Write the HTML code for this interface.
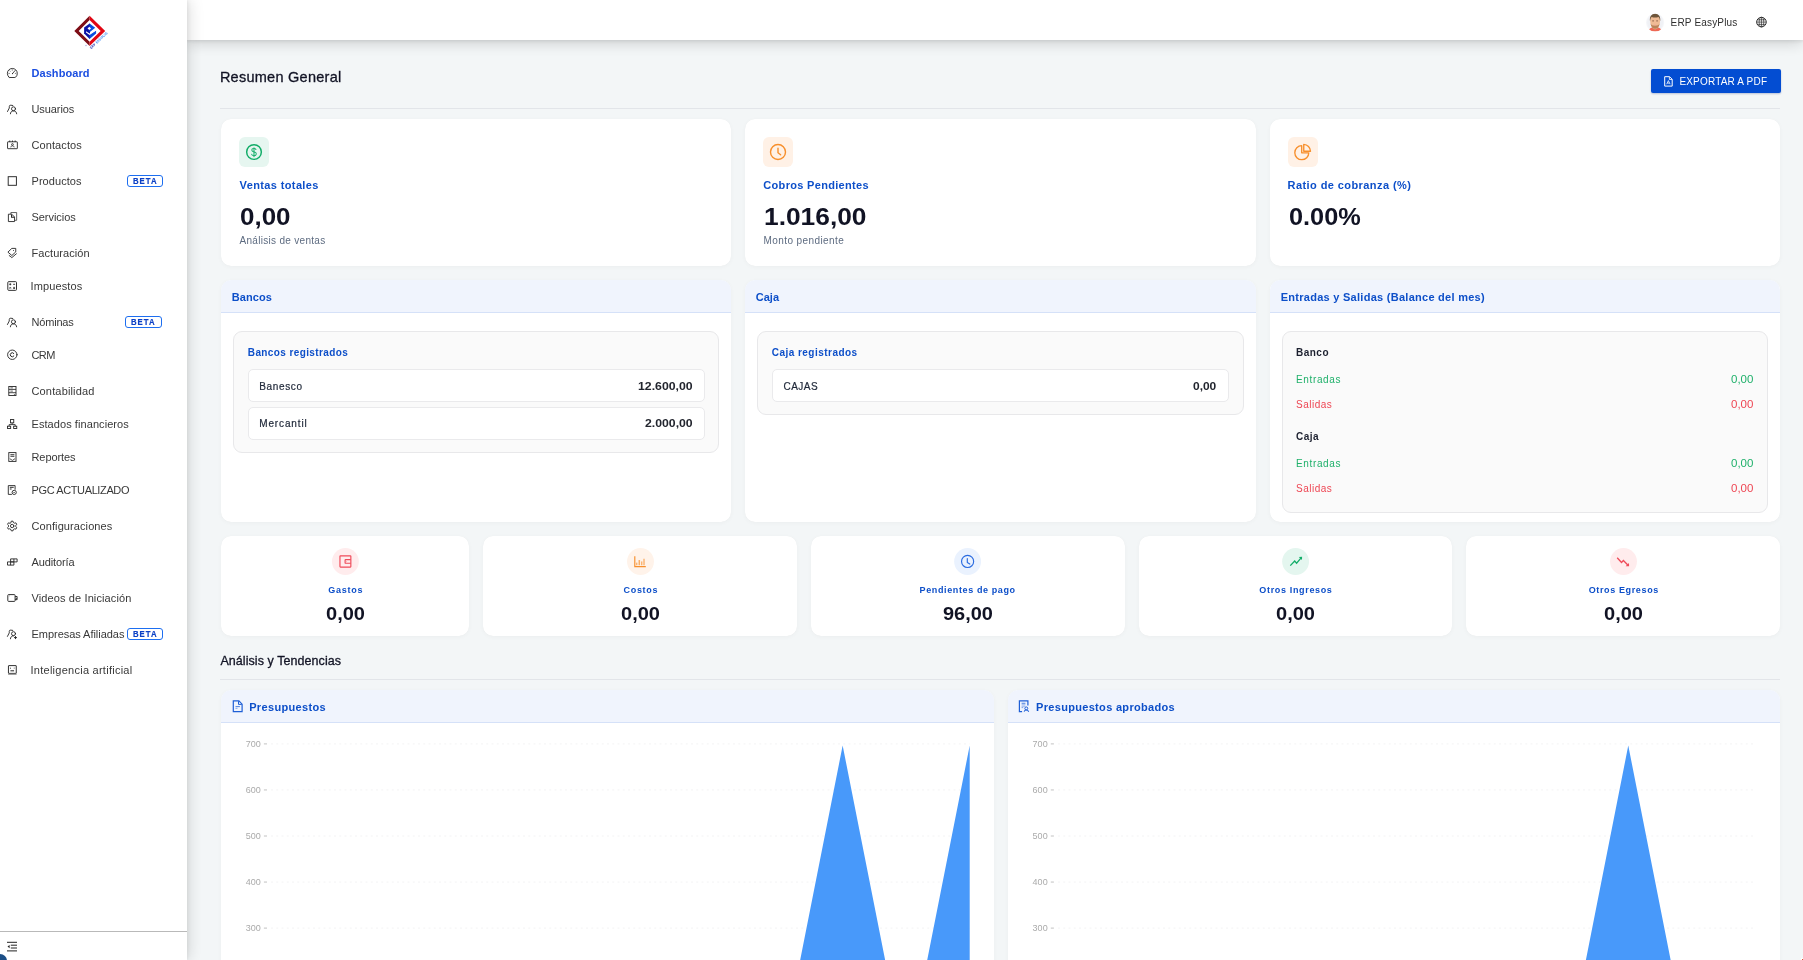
<!DOCTYPE html>
<html lang="es"><head><meta charset="utf-8"><title>ERP EasyPlus - Dashboard</title>
<style>
html,body{margin:0;padding:0}
body{width:1803px;height:960px;overflow:hidden;background:#f3f6f7;font-family:"Liberation Sans",sans-serif;position:relative}
div,span,svg{position:absolute;box-sizing:border-box}
.t{white-space:pre;display:block}
.card{background:#fff;border-radius:10px;box-shadow:0 1px 6px rgba(0,0,0,.045),0 0 1px rgba(0,0,0,.06)}
.hd{background:#f0f4fd;border-bottom:1px solid #d5e1f8;border-radius:10px 10px 0 0}
.inner{background:#fafafa;border:1px solid #e8e8ea;border-radius:9px}
.row{background:#fff;border:1px solid #eaeaec;border-radius:5px}
.hr{height:1px;background:#e2e5e9}
.beta{border:1px solid #1d6ef0;border-radius:3px;background:#fff}
</style></head><body><div id="wrap" style="left:0;top:0;width:1803px;height:960px;overflow:hidden;will-change:transform;opacity:.999">
<div id="header" style="left:187px;top:0;width:1616px;height:40px;background:#fff;box-shadow:0 3px 16px rgba(0,0,0,.17),0 1px 4px rgba(0,0,0,.10)"></div>
<svg style="left:1645px;top:13px" width="20" height="20" viewBox="-0.9 -0.2 20 20"><defs><clipPath id="av"><circle cx="9.200" cy="9.200" r="9.200"/></clipPath><radialGradient id="avg" cx=".5" cy=".5" r=".5"><stop offset=".8" stop-color="#f0f1f5"/><stop offset="1" stop-color="#f8f9fb"/></radialGradient></defs>
<g clip-path="url(#av)"><rect width="18.400" height="18.400" fill="url(#avg)"/>
<path d="M2.600 18.400C3 15.800 4.800 14.500 6.800 14.100H11.600C13.600 14.500 15.400 15.800 15.800 18.400Z" fill="#ee6955"/>
<path d="M6.700 13.300h5v1.600c-.8 1-1.700 1.300-2.500 1.300s-1.700-.3-2.500-1.300z" fill="#e9ab85"/>
<path d="M4.300 7.500C4.300 3.500 6.200 1.500 9.200 1.500S14.100 3.500 14.100 7.500C14.100 11.800 12.300 15.300 9.200 15.300S4.300 11.800 4.300 7.500Z" fill="#f0bb95"/>
<path d="M4.600 10.200C5.200 13.600 6.900 15.500 9.200 15.500S13.200 13.600 13.800 10.200C13 12 11.500 12.300 9.200 12.300S5.400 12 4.600 10.200Z" fill="#b98458"/>
<path d="M4.100 8C3.500 3.400 5.600.6 9.200.6S14.900 3.400 14.300 8C13.900 5.600 13.300 4.300 12.600 3.700C11.500 4.300 10.400 4.400 9.200 4.400S6.900 4.300 5.800 3.700C5.100 4.300 4.500 5.600 4.100 8Z" fill="#6e553a"/>
<path d="M6.300 7.700h1.800M10.300 7.700h1.800" stroke="#8a5f48" stroke-width=".9"/>
<path d="M8.200 12.100h2" stroke="#e79a8e" stroke-width=".9"/>
</g></svg>
<span class="t" style="top:18px;font-size:10px;line-height:10px;color:#2f2f2f;left:1670.60px;letter-spacing:0.171px;">ERP EasyPlus</span>
<svg style="left:1755px;top:16px" width="13" height="13" viewBox="-0.45 -0.1 13 13" fill="none" stroke="#2e2e2e" stroke-width=".7"><circle cx="6" cy="6" r="4.800" stroke-width="1"/><ellipse cx="6" cy="6" rx="2.300" ry="4.800"/><path d="M1.200 6h9.600M1.900 3.700h8.200M1.900 8.300h8.200M6 1.200v9.600"/></svg>
<div id="sidebar" style="left:0;top:0;width:187px;height:960px;background:#fff;box-shadow:2px 0 15px rgba(0,0,0,.14),1px 0 4px rgba(0,0,0,.07)"></div>
<svg style="left:70px;top:12px" width="42" height="40" viewBox="70 12 42 40">
<polygon points="89.600,15.800 74.300,30.900 89.600,46 89.600,41.700 78.700,30.900 89.600,20.100" fill="#7d0d16"/>
<polygon points="89.600,15.800 105.200,30.900 89.600,46 89.600,41.700 100.700,30.900 89.600,20.100" fill="#e20613"/>
<polygon points="90,23.400 89.600,23.400 84.100,27.600 84.100,33.600 89.600,38.900 90,38.500" fill="#0a12a6"/>
<polygon points="89.600,23.400 95.200,27.800 89.600,32.300 89.600,34.300 96.100,30.400 96.100,33.600 89.600,38.900" fill="#0a4fe0"/>
<polygon points="89.300,26.700 91.100,28.400 89.300,30.100 87.500,28.400" fill="#fff"/>
<polygon points="86,31.200 89.600,33.500 96.200,29.300 96.200,30.600 89.600,34.900 86,32.600" fill="#fff"/>
<text transform="translate(91.300,49.300) rotate(-43.500)" font-family="Liberation Sans, sans-serif" font-weight="700" font-size="3.600" fill="#2230b0" textLength="6.500" lengthAdjust="spacingAndGlyphs">ERP</text>
<text transform="translate(97,43.700) rotate(-43.500)" font-family="Liberation Sans, sans-serif" font-weight="700" font-size="3.600" fill="#3f8cf0" textLength="15" lengthAdjust="spacingAndGlyphs">EASYPLUS</text>
<circle cx="86" cy="45.500" r=".7" fill="#9aa2e0"/>
</svg>
<span class="t" style="top:68px;font-size:11px;line-height:11px;color:#1b4ee0;font-weight:700;left:31.50px;letter-spacing:0.064px;">Dashboard</span>
<svg style="left:5px;top:66px" width="14" height="14" viewBox="-7.30 -7.00 14 14" fill="none" stroke="#262626" stroke-width="0.9" stroke-linecap="round" stroke-linejoin="round"><path d="M-3.300 4.200A5 5 0 1 1 3.300 4.200Q3 4.500 2.600 4.500H-2.600Q-3 4.500-3.300 4.200Z"/><path d="M.2.6L2.700-2.400" stroke-width=".85"/><circle cx=".2" cy=".6" r=".55" fill="#262626" stroke="none"/><path d="M-3.600.4h.8M0-3.400v.7M-2.600-2.200l.5.5M3.600.4h-.6" stroke-width=".55"/></svg>
<span class="t" style="top:104px;font-size:11px;line-height:11px;color:#383838;left:31.50px;letter-spacing:-0.093px;">Usuarios</span>
<svg style="left:5px;top:102px" width="14" height="14" viewBox="-7.10 -7.00 14 14" fill="none" stroke="#262626" stroke-width="0.9" stroke-linecap="round" stroke-linejoin="round"><circle cx="1.400" cy="-.2" r="2"/><path d="M-1.700 4.800C-1.700 3.200-.5 1.900 1.400 1.900S4.600 3.200 4.600 4.800"/><path d="M.7-3.500L-1.300-3.800Q-2.800-3.900-2.800-2.500L-2.800-1L-4.600 2.500"/></svg>
<span class="t" style="top:140px;font-size:11px;line-height:11px;color:#383838;left:31.50px;letter-spacing:0.090px;">Contactos</span>
<svg style="left:5px;top:138px" width="14" height="14" viewBox="-7.45 -7.00 14 14" fill="none" stroke="#262626" stroke-width="0.9" stroke-linejoin="miter"><rect x="-4.900" y="-3.200" width="9.800" height="6.900" rx=".4"/><path d="M-2.700-4.500v1.500M0-4.500v1.500M2.700-4.500v1.500"/><circle cx="0" cy="-.5" r=".9" stroke-width=".8"/><path d="M-1.700 2.300C-1.500 1.200-.8.800 0 .8S1.500 1.200 1.700 2.300" stroke-width=".8"/></svg>
<span class="t" style="top:176px;font-size:11px;line-height:11px;color:#383838;left:31.50px;letter-spacing:0.059px;">Productos</span>
<svg style="left:5px;top:174px" width="14" height="14" viewBox="-7.30 -7.00 14 14" fill="none" stroke="#262626" stroke-width="0.95" stroke-linejoin="miter"><rect x="-4.100" y="-4.300" width="8.200" height="8.600"/></svg>
<span class="t" style="top:212px;font-size:11px;line-height:11px;color:#383838;left:31.50px;letter-spacing:-0.047px;">Servicios</span>
<svg style="left:5px;top:210px" width="14" height="14" viewBox="-7.35 -7.00 14 14" fill="none" stroke="#262626" stroke-width="0.9" stroke-linejoin="miter"><path d="M-3.950-2.800H-.6L2.200 0V4.550H-3.950Z"/><path d="M-.8-2.600V.2H2" stroke-width="1.100"/><path d="M-1.500-3V-4.450H4.300V3.300H2.500" stroke-opacity=".8"/></svg>
<span class="t" style="top:248px;font-size:11px;line-height:11px;color:#383838;left:31.50px;letter-spacing:0.065px;">Facturación</span>
<svg style="left:5px;top:246px" width="14" height="14" viewBox="-7.40 -7.00 14 14" fill="none" stroke="#262626" stroke-width="0.9" stroke-linecap="round" stroke-linejoin="round"><path d="M-.2-4.600H3.350V-1.100L-.55 2.500L-4.200-.6Z" stroke-linejoin="miter"/><circle cx="1.100" cy="-2.400" r=".5" fill="#262626" stroke="none"/><path d="M-3.500 2.300L-.55 4.600L4.300.5" stroke-linejoin="miter" stroke-linecap="butt"/></svg>
<span class="t" style="top:281px;font-size:11px;line-height:11px;color:#383838;left:30.50px;letter-spacing:0.125px;">Impuestos</span>
<svg style="left:5px;top:279px" width="14" height="14" viewBox="-7.15 -7.00 14 14" fill="none" stroke="#262626" stroke-width="0.95" stroke-linejoin="miter"><rect x="-4.350" y="-4.350" width="8.700" height="8.700" rx=".9"/><path d="M-2.900-1.700h2M-1.900-2.700v2M1-1.700h1.900" stroke-width=".9"/><path d="M-2.600 1.200l1.400 1.400M-1.200 1.200l-1.400 1.400M1 1.400h1.900M1 2.500h1.900" stroke-width=".8"/></svg>
<span class="t" style="top:317px;font-size:11px;line-height:11px;color:#383838;left:31.50px;letter-spacing:-0.192px;">Nóminas</span>
<svg style="left:5px;top:315px" width="14" height="14" viewBox="-7.05 -7.00 14 14" fill="none" stroke="#262626" stroke-width="0.9" stroke-linecap="round" stroke-linejoin="round"><circle cx="1.400" cy="-.2" r="2"/><path d="M-1.700 4.800C-1.700 3.200-.5 1.900 1.400 1.900S4.600 3.200 4.600 4.800"/><path d="M.7-3.500L-1.300-3.800Q-2.800-3.900-2.800-2.500L-2.800-1L-4.600 2.500"/></svg>
<span class="t" style="top:350px;font-size:11px;line-height:11px;color:#383838;left:31.50px;letter-spacing:-0.600px;">CRM</span>
<svg style="left:5px;top:347px" width="14" height="14" viewBox="-7.30 -7.75 14 14" fill="none" stroke="#262626" stroke-width="0.9" stroke-linecap="round" stroke-linejoin="round"><circle cx="0" cy="0" r="4.700"/><path d="M1.500-1.300A2 2 0 1 0 1.500 1.300" stroke-width="1"/></svg>
<span class="t" style="top:386px;font-size:11px;line-height:11px;color:#383838;left:31.50px;letter-spacing:0.156px;">Contabilidad</span>
<svg style="left:5px;top:384px" width="14" height="14" viewBox="-7.40 -7.00 14 14" fill="none" stroke="#262626" stroke-width="0.9" stroke-linejoin="miter"><rect x="-3.600" y="-4.500" width="7.200" height="9"/><path d="M-3.600-1.600h7.200M-3.600 1.700h7.200" stroke-width=".85"/><path d="M-2-3.100h2.500M-2 .1h2.500M1.500 3.300l1.500 .9" stroke-width=".7"/></svg>
<span class="t" style="top:419px;font-size:11px;line-height:11px;color:#383838;left:31.50px;letter-spacing:0.070px;">Estados financieros</span>
<svg style="left:5px;top:417px" width="14" height="14" viewBox="-7.15 -7.00 14 14" fill="none" stroke="#262626" stroke-width="0.9" stroke-linejoin="miter"><rect x="-1.600" y="-4.450" width="3.200" height="3.300"/><rect x="-4.600" y="2.200" width="3.100" height="2.300"/><rect x="1.500" y="2.200" width="3.100" height="2.300"/><path d="M0-1.100V.6M-3.050 2.200V.6H3.050V2.200" stroke-width=".85"/></svg>
<span class="t" style="top:452px;font-size:11px;line-height:11px;color:#383838;left:31.50px;letter-spacing:-0.091px;">Reportes</span>
<svg style="left:5px;top:450px" width="14" height="14" viewBox="-7.40 -7.00 14 14" fill="none" stroke="#262626" stroke-width="0.9" stroke-linejoin="miter"><rect x="-3.600" y="-4.400" width="7.200" height="8.800"/><path d="M-2-2.300h4M-2-.7h4" stroke-width=".9"/><path d="M-2.600 1.700L0 3.400L2.600 1.700" stroke-width=".8"/></svg>
<span class="t" style="top:485px;font-size:11px;line-height:11px;color:#383838;left:31.50px;letter-spacing:-0.382px;">PGC ACTUALIZADO</span>
<svg style="left:5px;top:483px" width="14" height="14" viewBox="-7.00 -7.00 14 14" fill="none" stroke="#262626" stroke-width="0.9" stroke-linejoin="miter"><path d="M-.1 4.400H-3.700V-4.400H3.100V-.3"/><path d="M-2.200-2.700h3.900M-2.200-1h1.800" stroke-width="1"/><circle cx="2.200" cy="2.400" r="2.100"/><path d="M1.400 2.500h1.400" stroke-width=".8"/></svg>
<span class="t" style="top:521px;font-size:11px;line-height:11px;color:#383838;left:31.50px;letter-spacing:0.090px;">Configuraciones</span>
<svg style="left:5px;top:519px" width="14" height="14" viewBox="-7.15 -7.00 14 14" fill="none" stroke="#262626" stroke-width="0.9" stroke-linecap="round" stroke-linejoin="round"><path d="M-1.16 -3.57 L-0.87 -4.82 L0.87 -4.82 L1.16 -3.57 L2.51 -2.79 L3.74 -3.16 L4.61 -1.66 L3.67 -0.78 L3.67 0.78 L4.61 1.66 L3.74 3.16 L2.51 2.79 L1.16 3.57 L0.87 4.82 L-0.87 4.82 L-1.16 3.57 L-2.51 2.79 L-3.74 3.16 L-4.61 1.66 L-3.67 0.78 L-3.67 -0.78 L-4.61 -1.66 L-3.74 -3.16 L-2.51 -2.79Z"/><circle cx="0" cy="0" r="1.700"/></svg>
<span class="t" style="top:557px;font-size:11px;line-height:11px;color:#383838;left:31.50px;letter-spacing:-0.114px;">Auditoría</span>
<svg style="left:5px;top:555px" width="14" height="14" viewBox="-7.30 -7.00 14 14" fill="none" stroke="#262626" stroke-width="0.9" stroke-linejoin="miter"><path d="M-1.700-3.100H4.800V-.1H-1.700ZM1.600-3.100V-.1M-4.800-.1H1.600V3.100H-4.800ZM-1.700-.1V3.100"/></svg>
<span class="t" style="top:593px;font-size:11px;line-height:11px;color:#383838;left:31.50px;letter-spacing:0.117px;">Videos de Iniciación</span>
<svg style="left:5px;top:591px" width="14" height="14" viewBox="-7.40 -7.00 14 14" fill="none" stroke="#262626" stroke-width="0.95" stroke-linejoin="miter"><rect x="-4.600" y="-3.400" width="7.300" height="6.800" rx=".8"/><path d="M2.700-1.500H4.700V1.700H2.700M2.900 1.300l1.700-.8" /><path d="M-3.200-2.100h.4" stroke-width=".7"/></svg>
<span class="t" style="top:629px;font-size:11px;line-height:11px;color:#383838;left:31.50px;letter-spacing:-0.038px;">Empresas Afiliadas</span>
<svg style="left:5px;top:627px" width="14" height="14" viewBox="-7.05 -7.00 14 14" fill="none" stroke="#262626" stroke-width="0.9" stroke-linecap="round" stroke-linejoin="round"><circle cx="1.450" cy="-.3" r="2"/><path d="M-1.650 4.800C-1.650 3.200-.5 1.900 1.400 1.800"/><path d="M.7-3.600L-1.300-3.900Q-2.800-4-2.800-2.600L-2.800-1.100L-4.600 2.400"/><path d="M3.450 2.500v2.200M2.350 3.600h2.200" stroke-width=".95"/></svg>
<span class="t" style="top:665px;font-size:11px;line-height:11px;color:#383838;left:30.50px;letter-spacing:0.259px;">Inteligencia artificial</span>
<svg style="left:5px;top:663px" width="14" height="14" viewBox="-7.35 -7.00 14 14" fill="none" stroke="#262626" stroke-width="0.95" stroke-linejoin="miter"><rect x="-3.900" y="-4.400" width="7.800" height="7.800" rx=".3"/><path d="M-4.200 4.200h8.400" stroke="#8a8a8a" stroke-width="1.200"/><path d="M-1.900-2.300v1" stroke-width=".9"/><path d="M1.300-1.900h1.400" stroke="#999" stroke-width="1"/><path d="M-1.900.8h3.600" stroke-width="1"/></svg>
<div class="beta" style="left:127px;top:175px;width:36px;height:12px;"></div>
<span class="t" style="top:177px;font-size:9px;line-height:9px;color:#0b40c5;font-weight:700;left:132.90px;letter-spacing:1.192px;transform:scaleX(0.86);transform-origin:0 0;-webkit-text-stroke:.2px #0b40c5;">BETA</span>
<div class="beta" style="left:125px;top:316px;width:37px;height:12px;"></div>
<span class="t" style="top:318px;font-size:9px;line-height:9px;color:#0b40c5;font-weight:700;left:130.90px;letter-spacing:1.192px;transform:scaleX(0.86);transform-origin:0 0;-webkit-text-stroke:.2px #0b40c5;">BETA</span>
<div class="beta" style="left:127px;top:628px;width:36px;height:12px;"></div>
<span class="t" style="top:630px;font-size:9px;line-height:9px;color:#0b40c5;font-weight:700;left:132.90px;letter-spacing:1.192px;transform:scaleX(0.86);transform-origin:0 0;-webkit-text-stroke:.2px #0b40c5;">BETA</span>
<div style="left:0;top:931px;width:187px;height:1px;background:#b9b9b9"></div>
<svg style="left:7px;top:941px" width="11" height="11" viewBox="0 -0.6 11 11" fill="none" stroke="#222" stroke-width="1"><path d="M0 .7h10M3.800 3.600h6.200M3.800 6.400h6.200M0 9.300h10"/><path d="M2.600 3.300v3.400L.5 5z" fill="#222" stroke="none"/></svg>
<div style="left:-7px;top:954px;width:14px;height:14px;border-radius:50%;background:#1c4f86"></div>
<span class="t" style="top:70px;font-size:14.5px;line-height:14.5px;color:#111324;left:219.90px;letter-spacing:0.261px;-webkit-text-stroke:.3px #111324;">Resumen General</span>
<div style="left:1651px;top:69px;width:130px;height:24px;background:#034dd2;border-radius:2px;box-shadow:0 1px 2px rgba(0,40,120,.25)"></div>
<svg style="left:1661px;top:74px" width="14" height="14" viewBox="-7.30 -7.20 14 14" fill="none" stroke="#fff" stroke-width="1.0" stroke-linejoin="miter"><path d="M-3.600-4.500H1.300L3.900-1.900V4.900H-3.600Z"/><path d="M1.100-4.300V-1.700H3.700" stroke-width=".8"/><path d="M-1.600 3L.1-.6L1.800 3M-.8 1.900H1" stroke-width=".8"/></svg>
<span class="t" style="top:77px;font-size:10px;line-height:10px;color:#fff;left:1679.40px;letter-spacing:0.184px;">EXPORTAR A PDF</span>
<div class="hr" style="left:220px;top:108px;width:1560px;height:1px;"></div>
<div class="card" style="left:221px;top:119px;width:510px;height:147px;"></div>
<div style="left:239px;top:137px;width:30px;height:30px;background:#e6f6f0;border-radius:6px"></div>
<svg style="left:244px;top:142px" width="20" height="20" viewBox="-10.00 -10.00 20 20" fill="none" stroke="#12ad68" stroke-width="1.45" stroke-linecap="round" stroke-linejoin="round"><circle cx="0" cy="0" r="7.350"/><text x="0" y="3.800" text-anchor="middle" font-family="Liberation Sans, sans-serif" font-size="10.500" fill="#12ad68" stroke="none">$</text><path d="M0-4.600V4.800" stroke-width=".55"/></svg>
<span class="t" style="top:180px;font-size:11px;line-height:11px;color:#0d4fc9;font-weight:700;left:239.60px;letter-spacing:0.372px;">Ventas totales</span>
<span class="t" style="top:205px;font-size:24px;line-height:24px;color:#111324;font-weight:700;left:239.90px;transform:scaleX(1.0806);transform-origin:0 0;">0,00</span>
<span class="t" style="top:236px;font-size:10px;line-height:10px;color:#5d6b80;left:239.50px;letter-spacing:0.300px;">Análisis de ventas</span>
<div class="card" style="left:745px;top:119px;width:511px;height:147px;"></div>
<div style="left:763px;top:137px;width:30px;height:30px;background:#fff1e6;border-radius:6px"></div>
<svg style="left:768px;top:142px" width="20" height="20" viewBox="-10.00 -10.00 20 20" fill="none" stroke="#f78f2c" stroke-width="1.4" stroke-linecap="round" stroke-linejoin="round"><circle cx="0" cy="0" r="7.500"/><path d="M0-3.700V.8L2.600 2.800"/></svg>
<span class="t" style="top:180px;font-size:11px;line-height:11px;color:#0d4fc9;font-weight:700;left:763.30px;letter-spacing:0.317px;">Cobros Pendientes</span>
<span class="t" style="top:205px;font-size:24px;line-height:24px;color:#111324;font-weight:700;left:764.00px;transform:scaleX(1.0969);transform-origin:0 0;">1.016,00</span>
<span class="t" style="top:236px;font-size:10px;line-height:10px;color:#5d6b80;left:763.50px;letter-spacing:0.411px;">Monto pendiente</span>
<div class="card" style="left:1270px;top:119px;width:510px;height:147px;"></div>
<div style="left:1288px;top:137px;width:30px;height:30px;background:#fff1e6;border-radius:6px"></div>
<svg style="left:1292px;top:141px" width="22" height="22" viewBox="-11.00 -11.00 22 22" fill="none" stroke="#f78f2c" stroke-width="1.35" stroke-linecap="round" stroke-linejoin="round"><path d="M-1.300-6.300A7 7 0 1 0 5.800.8H-1.300Z"/><path d="M.75-7.600V-.75H7.500A7 7 0 0 0 .75-7.600Z"/></svg>
<span class="t" style="top:180px;font-size:11px;line-height:11px;color:#0d4fc9;font-weight:700;left:1287.60px;letter-spacing:0.418px;">Ratio de cobranza (%)</span>
<span class="t" style="top:205px;font-size:24px;line-height:24px;color:#111324;font-weight:700;left:1288.90px;transform:scaleX(1.0545);transform-origin:0 0;">0.00%</span>
<div class="card" style="left:221px;top:280px;width:510px;height:242px;"></div>
<div class="hd" style="left:221px;top:280px;width:510px;height:33px;"></div>
<span class="t" style="top:292px;font-size:11px;line-height:11px;color:#0d4fc9;font-weight:700;left:231.70px;letter-spacing:0.096px;">Bancos</span>
<div class="card" style="left:745px;top:280px;width:511px;height:242px;"></div>
<div class="hd" style="left:745px;top:280px;width:511px;height:33px;"></div>
<span class="t" style="top:292px;font-size:11px;line-height:11px;color:#0d4fc9;font-weight:700;left:755.70px;letter-spacing:0.061px;">Caja</span>
<div class="card" style="left:1270px;top:280px;width:510px;height:242px;"></div>
<div class="hd" style="left:1270px;top:280px;width:510px;height:33px;"></div>
<span class="t" style="top:292px;font-size:11px;line-height:11px;color:#0d4fc9;font-weight:700;left:1280.70px;letter-spacing:0.273px;">Entradas y Salidas (Balance del mes)</span>
<div class="inner" style="left:233px;top:331px;width:486px;height:122px;"></div>
<span class="t" style="top:348px;font-size:10px;line-height:10px;color:#0d4fc9;font-weight:700;left:247.80px;letter-spacing:0.394px;">Bancos registrados</span>
<div class="row" style="left:248px;top:369px;width:457px;height:33px;"></div>
<span class="t" style="top:382px;font-size:10px;line-height:10px;color:#1e2738;left:259.20px;letter-spacing:0.658px;-webkit-text-stroke:.2px #1e2738;">Banesco</span>
<span class="t" style="top:382px;font-size:10px;line-height:10px;color:#22252e;font-weight:700;left:637.60px;transform:scaleX(1.2287);transform-origin:0 0;">12.600,00</span>
<div class="row" style="left:248px;top:407px;width:457px;height:33px;"></div>
<span class="t" style="top:419px;font-size:10px;line-height:10px;color:#1e2738;left:259.20px;letter-spacing:0.869px;-webkit-text-stroke:.2px #1e2738;">Mercantil</span>
<span class="t" style="top:419px;font-size:10px;line-height:10px;color:#22252e;font-weight:700;left:644.60px;transform:scaleX(1.2245);transform-origin:0 0;">2.000,00</span>
<div class="inner" style="left:757px;top:331px;width:487px;height:84px;"></div>
<span class="t" style="top:348px;font-size:10px;line-height:10px;color:#0d4fc9;font-weight:700;left:771.70px;letter-spacing:0.473px;">Caja registrados</span>
<div class="row" style="left:772px;top:369px;width:457px;height:33px;"></div>
<span class="t" style="top:382px;font-size:10px;line-height:10px;color:#1e2738;left:783.50px;letter-spacing:0.460px;-webkit-text-stroke:.2px #1e2738;">CAJAS</span>
<span class="t" style="top:382px;font-size:10px;line-height:10px;color:#22252e;font-weight:700;left:1193.30px;transform:scaleX(1.1959);transform-origin:0 0;">0,00</span>
<div class="inner" style="left:1282px;top:331px;width:486px;height:182px;"></div>
<span class="t" style="top:348px;font-size:10px;line-height:10px;color:#1d2130;font-weight:700;left:1296.10px;letter-spacing:0.462px;">Banco</span>
<span class="t" style="top:375px;font-size:10px;line-height:10px;color:#1fb06a;left:1296.10px;letter-spacing:0.611px;">Entradas</span>
<span class="t" style="top:375px;font-size:10px;line-height:10px;color:#1fb06a;left:1730.50px;transform:scaleX(1.1507);transform-origin:0 0;">0,00</span>
<span class="t" style="top:400px;font-size:10px;line-height:10px;color:#ee4653;left:1296.10px;letter-spacing:0.467px;">Salidas</span>
<span class="t" style="top:400px;font-size:10px;line-height:10px;color:#ee4653;left:1730.50px;transform:scaleX(1.1507);transform-origin:0 0;">0,00</span>
<span class="t" style="top:432px;font-size:10px;line-height:10px;color:#1d2130;font-weight:700;left:1296.10px;letter-spacing:0.446px;">Caja</span>
<span class="t" style="top:459px;font-size:10px;line-height:10px;color:#1fb06a;left:1296.10px;letter-spacing:0.611px;">Entradas</span>
<span class="t" style="top:459px;font-size:10px;line-height:10px;color:#1fb06a;left:1730.50px;transform:scaleX(1.1507);transform-origin:0 0;">0,00</span>
<span class="t" style="top:484px;font-size:10px;line-height:10px;color:#ee4653;left:1296.10px;letter-spacing:0.467px;">Salidas</span>
<span class="t" style="top:484px;font-size:10px;line-height:10px;color:#ee4653;left:1730.50px;transform:scaleX(1.1507);transform-origin:0 0;">0,00</span>
<div class="card" style="left:221px;top:536px;width:248px;height:100px;"></div>
<svg style="left:329px;top:545px" width="32" height="32" viewBox="-16.40 -16.45 32 32" fill="none" stroke="#ef4b5a" stroke-width="1.15" stroke-linejoin="miter"><circle cx="0" cy="0" r="13.45" fill="#ffeced" stroke="none"/><rect x="-5.450" y="-5.600" width="10.900" height="11.200" rx=".5"/><path d="M5.400-1.900H.3Q-.3-1.900-.3-1.300V1.200Q-.3 1.800.3 1.800H5.400"/><path d="M1.200 0h.3" stroke-width="1.100"/></svg>
<span class="t" style="top:586px;font-size:9px;line-height:9px;color:#0d4fc9;font-weight:700;left:328.35px;letter-spacing:0.719px;">Gastos</span>
<span class="t" style="top:605px;font-size:18px;line-height:18px;color:#111324;font-weight:700;left:325.90px;transform:scaleX(1.1136);transform-origin:0 0;">0,00</span>
<div class="card" style="left:483px;top:536px;width:314px;height:100px;"></div>
<svg style="left:624px;top:545px" width="32" height="32" viewBox="-16.50 -16.45 32 32" fill="none" stroke="#f78f2c" stroke-width="1.1" stroke-linejoin="miter"><circle cx="0" cy="0" r="13.45" fill="#fff3ea" stroke="none"/><path d="M-5.700-5.100V5.100H5.300" stroke-width="1.150"/><path d="M-3.700 1.200v2.600M1.300 0v3.800M3.500-2.700v6.500" stroke-width=".9"/><path d="M-1.200-1.400v5.200" stroke-width="1.500" stroke-opacity=".7"/></svg>
<span class="t" style="top:586px;font-size:9px;line-height:9px;color:#0d4fc9;font-weight:700;left:623.50px;letter-spacing:0.701px;">Costos</span>
<span class="t" style="top:605px;font-size:18px;line-height:18px;color:#111324;font-weight:700;left:621.00px;transform:scaleX(1.1136);transform-origin:0 0;">0,00</span>
<div class="card" style="left:811px;top:536px;width:314px;height:100px;"></div>
<svg style="left:951px;top:545px" width="32" height="32" viewBox="-16.60 -16.45 32 32" fill="none" stroke="#2a6be0" stroke-width="1.15" stroke-linecap="round" stroke-linejoin="round"><circle cx="0" cy="0" r="13.45" fill="#eaf2fe" stroke="none"/><circle cx="0" cy="0" r="6.050"/><path d="M-.3-2.900V1.100L2.200 2.600"/></svg>
<span class="t" style="top:586px;font-size:9px;line-height:9px;color:#0d4fc9;font-weight:700;left:919.60px;letter-spacing:0.617px;">Pendientes de pago</span>
<span class="t" style="top:605px;font-size:18px;line-height:18px;color:#111324;font-weight:700;left:942.65px;transform:scaleX(1.1081);transform-origin:0 0;">96,00</span>
<div class="card" style="left:1139px;top:536px;width:313px;height:100px;"></div>
<svg style="left:1279px;top:545px" width="32" height="32" viewBox="-16.60 -16.45 32 32" fill="none" stroke="#12ad68" stroke-width="1.3" stroke-linecap="round" stroke-linejoin="round"><circle cx="0" cy="0" r="13.45" fill="#e4f6ef" stroke="none"/><path d="M-5.300 4.200L-.9-.4L1 1.700L5.300-3.300" stroke-linecap="butt" stroke-linejoin="miter"/><path d="M3.200-4.400L6.500-4.600L6.400-1.400Z" fill="#12ad68" stroke="none"/></svg>
<span class="t" style="top:586px;font-size:9px;line-height:9px;color:#0d4fc9;font-weight:700;left:1259.35px;letter-spacing:0.653px;">Otros Ingresos</span>
<span class="t" style="top:605px;font-size:18px;line-height:18px;color:#111324;font-weight:700;left:1276.10px;transform:scaleX(1.1136);transform-origin:0 0;">0,00</span>
<div class="card" style="left:1466px;top:536px;width:314px;height:100px;"></div>
<svg style="left:1607px;top:545px" width="32" height="32" viewBox="-16.50 -16.45 32 32" fill="none" stroke="#ef4b5a" stroke-width="1.3" stroke-linecap="round" stroke-linejoin="round"><circle cx="0" cy="0" r="13.45" fill="#ffeced" stroke="none"/><path d="M-6.300-3.700L-2 1.100L-.1-1L4.300 3.600" stroke-linecap="butt" stroke-linejoin="miter"/><path d="M2.100 4.700L5.600 4.900L5.500 1.500Z" fill="#ef4b5a" stroke="none"/></svg>
<span class="t" style="top:586px;font-size:9px;line-height:9px;color:#0d4fc9;font-weight:700;left:1588.75px;letter-spacing:0.624px;">Otros Egresos</span>
<span class="t" style="top:605px;font-size:18px;line-height:18px;color:#111324;font-weight:700;left:1604.00px;transform:scaleX(1.1136);transform-origin:0 0;">0,00</span>
<span class="t" style="top:655px;font-size:12.5px;line-height:12.5px;color:#111324;left:220.40px;letter-spacing:0.067px;-webkit-text-stroke:.3px #111324;">Análisis y Tendencias</span>
<div class="hr" style="left:220px;top:679px;width:1560px;height:1px;"></div>
<div class="card" style="left:221px;top:690px;width:772.5px;height:285px;"></div>
<div class="hd" style="left:221px;top:690px;width:772.5px;height:33px;"></div>
<svg style="left:229px;top:698px" width="16" height="16" viewBox="-8.70 -8.30 16 16" fill="none" stroke="#1f5fd6" stroke-width="1.2" stroke-linejoin="miter"><path d="M-4.400-5.350H1.200L4.400-2.100V5.350H-4.400Z"/><path d="M.8-5.100V-1.900H4.100" stroke-width="1"/><path d="M-2.200.3H2.200" stroke-width="1" stroke-opacity=".75"/><path d="M-2.200 2h2" stroke-width=".9" stroke-opacity=".6"/></svg>
<span class="t" style="top:702px;font-size:11px;line-height:11px;color:#0d4fc9;font-weight:700;left:249.20px;letter-spacing:0.343px;">Presupuestos</span>
<svg style="left:221px;top:723px" width="772.5" height="237" viewBox="221 723 772.5 237"><line x1="271" x2="969.7" y1="743.90" y2="743.90" stroke="#f3f3f4" stroke-width="1" stroke-dasharray="2 3.250"/><line x1="263.9" x2="267.0" y1="743.90" y2="743.90" stroke="#c2c2c2" stroke-width="1"/><text x="245.7" y="747.10" font-family="Liberation Sans, sans-serif" font-size="9" fill="#aaaaaa" textLength="15.1">700</text><line x1="271" x2="969.7" y1="789.95" y2="789.95" stroke="#f3f3f4" stroke-width="1" stroke-dasharray="2 3.250"/><line x1="263.9" x2="267.0" y1="789.95" y2="789.95" stroke="#c2c2c2" stroke-width="1"/><text x="245.7" y="793.15" font-family="Liberation Sans, sans-serif" font-size="9" fill="#aaaaaa" textLength="15.1">600</text><line x1="271" x2="969.7" y1="836.00" y2="836.00" stroke="#f3f3f4" stroke-width="1" stroke-dasharray="2 3.250"/><line x1="263.9" x2="267.0" y1="836.00" y2="836.00" stroke="#c2c2c2" stroke-width="1"/><text x="245.7" y="839.20" font-family="Liberation Sans, sans-serif" font-size="9" fill="#aaaaaa" textLength="15.1">500</text><line x1="271" x2="969.7" y1="882.05" y2="882.05" stroke="#f3f3f4" stroke-width="1" stroke-dasharray="2 3.250"/><line x1="263.9" x2="267.0" y1="882.05" y2="882.05" stroke="#c2c2c2" stroke-width="1"/><text x="245.7" y="885.25" font-family="Liberation Sans, sans-serif" font-size="9" fill="#aaaaaa" textLength="15.1">400</text><line x1="271" x2="969.7" y1="928.10" y2="928.10" stroke="#f3f3f4" stroke-width="1" stroke-dasharray="2 3.250"/><line x1="263.9" x2="267.0" y1="928.10" y2="928.10" stroke="#c2c2c2" stroke-width="1"/><text x="245.7" y="931.30" font-family="Liberation Sans, sans-serif" font-size="9" fill="#aaaaaa" textLength="15.1">300</text><path d="M271.00 1066.25 L334.52 1066.25 L398.04 1066.25 L461.55 1066.25 L525.07 1066.25 L588.59 1066.25 L652.11 1066.25 L715.63 1066.25 L779.15 1066.25 L842.66 745.51 L906.18 1066.25 L969.70 745.51 L969.70 1066.25 L271.00 1066.25Z" fill="#4899fa"/></svg>
<div class="card" style="left:1008px;top:690px;width:772px;height:285px;"></div>
<div class="hd" style="left:1008px;top:690px;width:772px;height:33px;"></div>
<svg style="left:1015px;top:698px" width="16" height="16" viewBox="-8.80 -8.30 16 16" fill="none" stroke="#1f5fd6" stroke-width="1.2" stroke-linejoin="miter"><path d="M-1.700 5.300H-4.400V-5.350H4.100V-.9"/><path d="M-2.200-2.700H1.600" stroke-width="1.800" stroke-opacity=".6" stroke-linecap="butt"/><path d="M-2.200-.2H1.600M-2.200 1.300h1.600" stroke-width=".9" stroke-opacity=".6" stroke-linecap="butt"/><circle cx="2.500" cy="2.100" r="1.450" stroke-width="1"/><path d="M.3 5.400C.7 4.200 1.500 3.700 2.500 3.700S4.400 4.200 4.900 5.400" stroke-width="1.050"/></svg>
<span class="t" style="top:702px;font-size:11px;line-height:11px;color:#0d4fc9;font-weight:700;left:1036.00px;letter-spacing:0.318px;">Presupuestos aprobados</span>
<svg style="left:1008px;top:723px" width="772" height="237" viewBox="1008 723 772 237"><line x1="1058" x2="1755" y1="743.90" y2="743.90" stroke="#f3f3f4" stroke-width="1" stroke-dasharray="2 3.250"/><line x1="1050.8" x2="1053.9" y1="743.90" y2="743.90" stroke="#c2c2c2" stroke-width="1"/><text x="1032.5" y="747.10" font-family="Liberation Sans, sans-serif" font-size="9" fill="#aaaaaa" textLength="15.2">700</text><line x1="1058" x2="1755" y1="789.95" y2="789.95" stroke="#f3f3f4" stroke-width="1" stroke-dasharray="2 3.250"/><line x1="1050.8" x2="1053.9" y1="789.95" y2="789.95" stroke="#c2c2c2" stroke-width="1"/><text x="1032.5" y="793.15" font-family="Liberation Sans, sans-serif" font-size="9" fill="#aaaaaa" textLength="15.2">600</text><line x1="1058" x2="1755" y1="836.00" y2="836.00" stroke="#f3f3f4" stroke-width="1" stroke-dasharray="2 3.250"/><line x1="1050.8" x2="1053.9" y1="836.00" y2="836.00" stroke="#c2c2c2" stroke-width="1"/><text x="1032.5" y="839.20" font-family="Liberation Sans, sans-serif" font-size="9" fill="#aaaaaa" textLength="15.2">500</text><line x1="1058" x2="1755" y1="882.05" y2="882.05" stroke="#f3f3f4" stroke-width="1" stroke-dasharray="2 3.250"/><line x1="1050.8" x2="1053.9" y1="882.05" y2="882.05" stroke="#c2c2c2" stroke-width="1"/><text x="1032.5" y="885.25" font-family="Liberation Sans, sans-serif" font-size="9" fill="#aaaaaa" textLength="15.2">400</text><line x1="1058" x2="1755" y1="928.10" y2="928.10" stroke="#f3f3f4" stroke-width="1" stroke-dasharray="2 3.250"/><line x1="1050.8" x2="1053.9" y1="928.10" y2="928.10" stroke="#c2c2c2" stroke-width="1"/><text x="1032.5" y="931.30" font-family="Liberation Sans, sans-serif" font-size="9" fill="#aaaaaa" textLength="15.2">300</text><path d="M1058.00 1066.25 L1121.36 1066.25 L1184.73 1066.25 L1248.09 1066.25 L1311.45 1066.25 L1374.82 1066.25 L1438.18 1066.25 L1501.55 1066.25 L1564.91 1066.25 L1628.27 745.51 L1691.64 1066.25 L1755.00 1066.25 L1755.00 1066.25 L1058.00 1066.25Z" fill="#4899fa"/></svg>
<div style="left:1801px;top:958px;width:2px;height:2px;background:#fff"></div><div style="left:1802px;top:959px;width:1px;height:1px;background:#d9532f"></div>
</div></body></html>
